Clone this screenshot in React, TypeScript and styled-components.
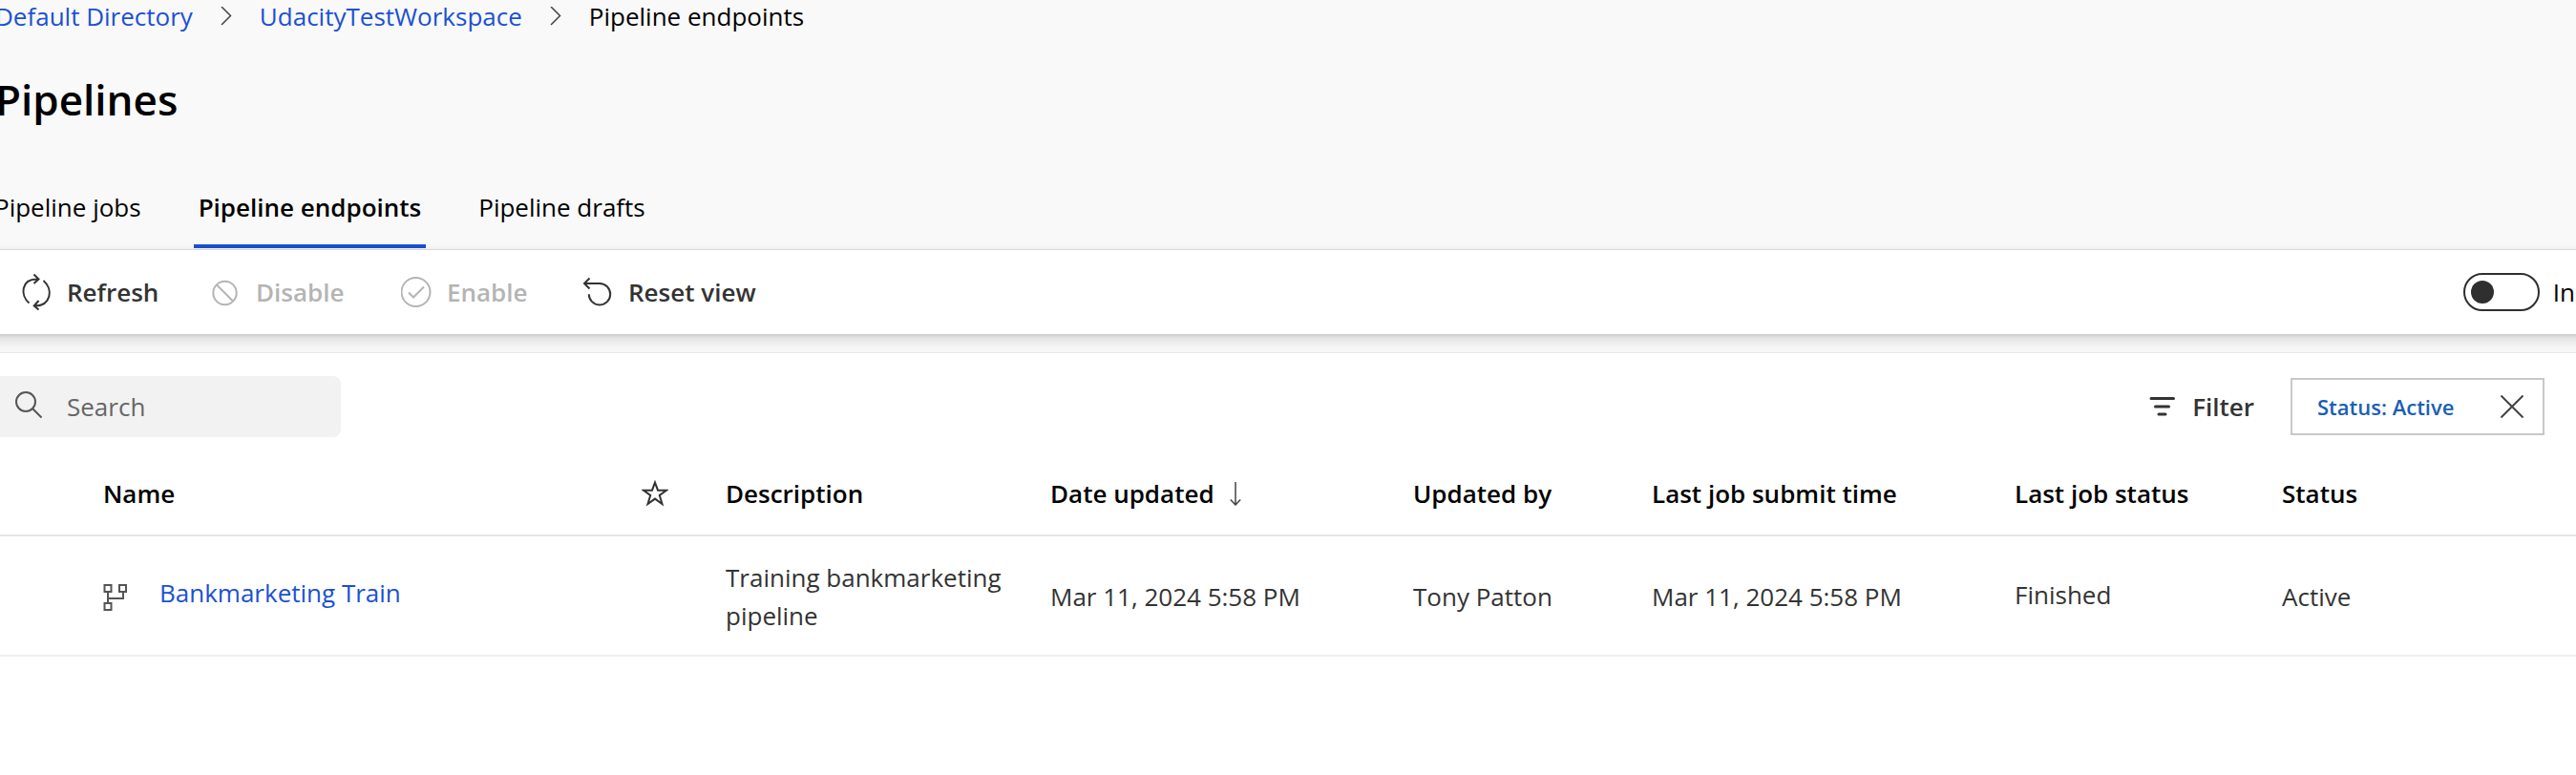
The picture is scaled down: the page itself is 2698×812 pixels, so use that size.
import React from 'react';
import styled, { createGlobalStyle } from 'styled-components';

const GlobalStyle = createGlobalStyle`
  * { box-sizing: border-box; }
  body { margin: 0; background: #fff; }
  button, input { font: inherit; color: inherit; }
`;

const Page = styled.div`
  overflow: hidden;
  font: 400 26px/40px "Open Sans", "Noto Sans", sans-serif;
  color: #333;
`;

const Header = styled.header`
  background: #f9f9f9;
  border-bottom: 1px solid #e6e6e6;
`;

const HeaderContent = styled.div`
  margin-left: -5px;
  padding-bottom: 1px;
  color: #000;
`;

const Breadcrumb = styled.nav`
  display: flex;
  align-items: center;
  line-height: 34px;
  white-space: nowrap;
  svg { margin: 0 28px; }
`;

const Link = styled.a`
  color: #1b51d3;
  text-decoration: none;
`;

const Title = styled.h1`
  margin: 40px 0 0;
  font-size: 44px;
  line-height: 60px;
  font-weight: 600;
`;

const Tabs = styled.div`
  display: flex;
  gap: 50px;
  margin-left: -6px;
  padding-top: 63px;
`;

const Tab = styled.button<{ $active?: boolean }>`
  padding: 0 5px 19px;
  border: 0;
  border-bottom: 4px solid ${(p) => (p.$active ? '#1b51d3' : 'transparent')};
  background: none;
  font-weight: ${(p) => (p.$active ? 600 : 400)};
  line-height: 40px;
  white-space: nowrap;
`;

/* Wider than the page on both sides, so that the shadow keeps its strength at the edges. */
const Toolbar = styled.div`
  position: relative;
  display: flex;
  align-items: center;
  justify-content: space-between;
  height: 88px;
  margin: 0 -20px;
  padding: 0 21px 0 42px;
  background: #fff;
  box-shadow: 0 6px 14px rgba(0, 0, 0, 0.14), 0 1px 4px rgba(0, 0, 0, 0.12);
`;

const Commands = styled.div`
  display: grid;
  grid-template-columns: 198px 200px 190px auto;
`;

const Command = styled.button`
  display: flex;
  align-items: center;
  gap: 16px;
  padding: 0;
  border: 0;
  background: none;
  color: #333;
  font-weight: 600;
  white-space: nowrap;
  &:disabled { color: #b4b4b4; }
`;

const ToggleLabel = styled.label`
  display: flex;
  align-items: center;
  gap: 14px;
  color: #000;
`;

const Toggle = styled.input`
  appearance: none;
  display: flex;
  align-items: center;
  width: 80px;
  height: 40px;
  margin: 0;
  padding: 0 6px;
  border: 2px solid #2f2f2f;
  border-radius: 20px;
  &::before {
    content: "";
    width: 24px;
    height: 24px;
    border-radius: 50%;
    background: #2f2f2f;
  }
  &:checked { justify-content: flex-end; }
`;

const Panel = styled.main`
  position: relative;
  margin-top: 19px;
  padding-top: 24px;
  border-top: 1px solid #e6e6e6;
  background: #fff;
`;

const Body = styled.div`
  background: #f9f9f9;
`;

const FilterBar = styled.div`
  display: flex;
  align-items: center;
  justify-content: space-between;
  padding-right: 33px;
`;

const SearchBox = styled.label`
  display: flex;
  align-items: center;
  gap: 24px;
  width: 357px;
  height: 64px;
  padding-left: 16px;
  border-radius: 0 8px 8px 0;
  background: #f2f2f2;
`;

const SearchInput = styled.input`
  flex: 1;
  min-width: 0;
  padding: 0;
  border: 0;
  outline: 0;
  background: none;
  &::placeholder { color: #666; opacity: 1; }
`;

const Filters = styled.div`
  display: flex;
  align-items: center;
  gap: 38px;
`;

const Chip = styled.div`
  display: flex;
  align-items: center;
  justify-content: space-between;
  width: 266px;
  height: 60px;
  padding: 0 20px 0 26px;
  border: 2px solid #c8c8c8;
`;

const ChipButton = styled.button`
  display: flex;
  padding: 0;
  border: 0;
  background: none;
  color: #1a5fb4;
  font-size: 22px;
  font-weight: 600;
  white-space: nowrap;
`;

const Table = styled.table`
  width: 100%;
  table-layout: fixed;
  border-spacing: 0;
`;

const Column = styled.col<{ $width?: number }>`
  width: ${(p) => (p.$width ? `${p.$width}px` : 'auto')};
`;

const HeadCell = styled.th`
  padding: 39px 0 23px 16px;
  border-bottom: 2px solid #e6e6e6;
  color: #000;
  font-weight: 600;
  text-align: left;
  white-space: nowrap;
  svg { display: block; }
`;

const SortButton = styled.button`
  display: flex;
  align-items: center;
  gap: 16px;
  padding: 0;
  border: 0;
  background: none;
`;

const Cell = styled.td`
  padding: 23px 0 21px 16px;
  border-bottom: 2px solid #f0f0f0;
`;

const NameContent = styled.div`
  display: flex;
  align-items: center;
  gap: 33px;
  svg { margin-top: 2px; }
  a { padding-bottom: 8px; }
`;

const JobStatus = styled.div`
  padding-bottom: 4px;
`;

const stroke = { fill: 'none', stroke: 'currentColor', strokeWidth: 2 } as const;

const ChevronIcon = () => (
  <svg width="14" height="20" viewBox="0 0 14 20" {...stroke} stroke="#444" strokeWidth="1.5">
    <path d="M2 0l9.500 9.500L2 19" />
  </svg>
);

const RefreshIcon = () => (
  <svg width="32" height="40" viewBox="0 0 32 40" {...stroke}>
    <path d="M8.500 31.500C-1 23.500 0 6.500 16.500 6.500H18M13.500 1.500l5 5-5 4.500M23.500 8C34 17 31.500 34 15 34.500h-1M18.500 29l-4.800 5.500 4.800 4" />
  </svg>
);

const DisableIcon = () => (
  <svg width="32" height="32" viewBox="0 0 32 32" {...stroke}>
    <circle cx="15.500" cy="17" r="12.200" />
    <path d="M7 8.500l17 17" />
  </svg>
);

const EnableIcon = () => (
  <svg width="32" height="32" viewBox="0 0 32 32" {...stroke}>
    <circle cx="15.500" cy="16" r="15" />
    <path d="M8 16.500l5 5L24 10.500" />
  </svg>
);

const ResetIcon = () => (
  <svg width="32" height="32" viewBox="0 0 32 32" {...stroke}>
    <path d="M7.500 1.500L2 7l5.500 5.500M2 7h16a11.200 11.200 0 1 1-11.200 11.200" />
  </svg>
);

const SearchIcon = () => (
  <svg width="30" height="32" viewBox="0 0 30 32" {...stroke} stroke="#555">
    <circle cx="11" cy="11" r="10" />
    <path d="M18 18l9.500 9.500" />
  </svg>
);

const FilterIcon = () => (
  <svg width="30" height="24" viewBox="0 0 30 24" {...stroke} strokeWidth="3" strokeLinecap="round">
    <path d="M3 3.500h23.500M7.500 12h14M11 20h7" />
  </svg>
);

const CloseIcon = () => (
  <svg width="24" height="24" viewBox="0 0 24 24" {...stroke} stroke="#444">
    <path d="M.5.5l23 23M23.500.5l-23 23" />
  </svg>
);

const StarIcon = () => (
  <svg width="28" height="28" viewBox="0 0 28 28" {...stroke} stroke="#333">
    <path d="M14 2.500l3 8.200h9l-7.200 5.300 2.700 9-7.500-5.400L6.500 25l2.700-9L2 10.700h9z" />
  </svg>
);

const ArrowDownIcon = () => (
  <svg width="12" height="26" viewBox="0 0 12 26" {...stroke} stroke="#444" strokeWidth="1.500">
    <path d="M6 1v24M.8 19.500L6 25l5.200-5.500" />
  </svg>
);

const PipelineIcon = () => (
  <svg width="26" height="28" viewBox="0 0 26 28" {...stroke} stroke="#555">
    <path d="M1.500 1h7v7h-7zM17 1h7v7h-7zM1.500 20h7v7h-7zM5 8v12M5 15h16V8" />
  </svg>
);

export default function App() {
  return (
    <Page>
      <GlobalStyle />
      <Header>
        <HeaderContent>
          <Breadcrumb aria-label="Breadcrumb">
            <Link href="#directory">Default Directory</Link>
            <ChevronIcon />
            <Link href="#workspace">UdacityTestWorkspace</Link>
            <ChevronIcon />
            <span aria-current="page">Pipeline endpoints</span>
          </Breadcrumb>
          <Title>Pipelines</Title>
          <Tabs role="tablist">
            <Tab role="tab" aria-selected={false}>Pipeline jobs</Tab>
            <Tab role="tab" aria-selected $active>Pipeline endpoints</Tab>
            <Tab role="tab" aria-selected={false}>Pipeline drafts</Tab>
          </Tabs>
        </HeaderContent>
      </Header>
      <Body>
        <Toolbar>
          <Commands>
            <Command><RefreshIcon />Refresh</Command>
            <Command disabled><DisableIcon />Disable</Command>
            <Command disabled><EnableIcon />Enable</Command>
            <Command><ResetIcon />Reset view</Command>
          </Commands>
          <ToggleLabel>
            <Toggle type="checkbox" role="switch" />
            In
          </ToggleLabel>
        </Toolbar>
        <Panel>
          <FilterBar>
            <SearchBox>
              <SearchIcon />
              <SearchInput type="text" placeholder="Search" aria-label="Search" />
            </SearchBox>
            <Filters>
              <Command><FilterIcon />Filter</Command>
              <Chip>
                <ChipButton>Status: Active</ChipButton>
                <ChipButton aria-label="Remove status filter"><CloseIcon /></ChipButton>
              </Chip>
            </Filters>
          </FilterBar>
          <Table>
            <colgroup>
              <Column $width={92} />
              <Column $width={564} />
              <Column $width={88} />
              <Column $width={340} />
              <Column $width={380} />
              <Column $width={250} />
              <Column $width={380} />
              <Column $width={280} />
              <Column />
            </colgroup>
            <thead>
              <tr>
                <HeadCell />
                <HeadCell>Name</HeadCell>
                <HeadCell aria-label="Favorite"><StarIcon /></HeadCell>
                <HeadCell>Description</HeadCell>
                <HeadCell aria-sort="descending">
                  <SortButton>Date updated<ArrowDownIcon /></SortButton>
                </HeadCell>
                <HeadCell>Updated by</HeadCell>
                <HeadCell>Last job submit time</HeadCell>
                <HeadCell>Last job status</HeadCell>
                <HeadCell>Status</HeadCell>
              </tr>
            </thead>
            <tbody>
              <tr>
                <Cell />
                <Cell>
                  <NameContent>
                    <PipelineIcon />
                    <Link href="#bankmarketing-train">Bankmarketing Train</Link>
                  </NameContent>
                </Cell>
                <Cell />
                <Cell>Training bankmarketing pipeline</Cell>
                <Cell>Mar 11, 2024 5:58 PM</Cell>
                <Cell>Tony Patton</Cell>
                <Cell>Mar 11, 2024 5:58 PM</Cell>
                <Cell><JobStatus>Finished</JobStatus></Cell>
                <Cell>Active</Cell>
              </tr>
            </tbody>
          </Table>
        </Panel>
      </Body>
    </Page>
  );
}
